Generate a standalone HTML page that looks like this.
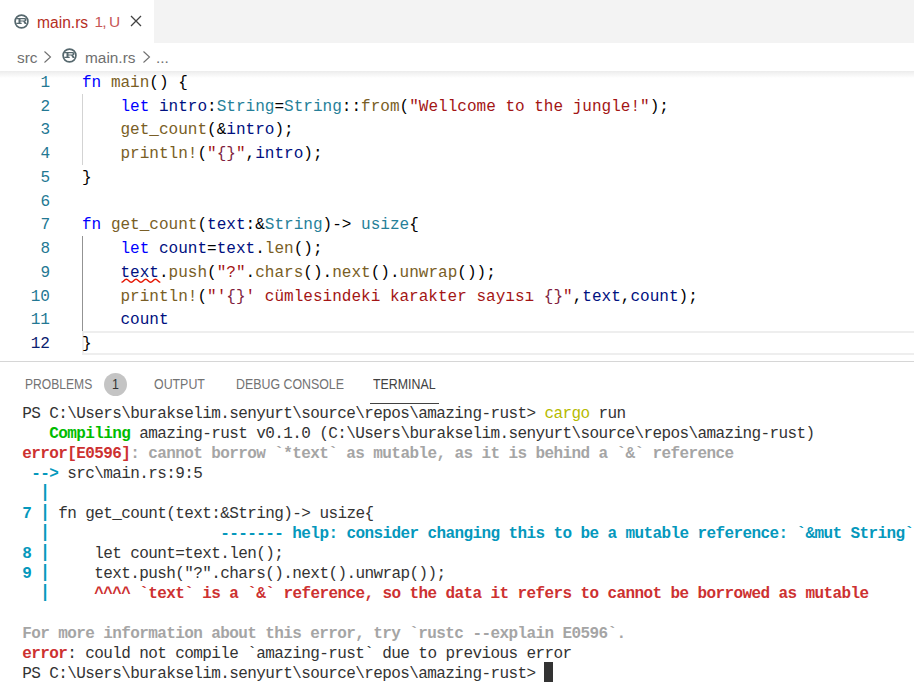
<!DOCTYPE html>
<html><head><meta charset="utf-8">
<style>
*{margin:0;padding:0;box-sizing:border-box}
html,body{width:914px;height:686px;overflow:hidden;background:#fff}
body{position:relative;font-family:"Liberation Sans",sans-serif}
.abs{position:absolute;white-space:pre}
#tabs{position:absolute;left:0;top:0;width:914px;height:43px;background:#f3f3f3}
#tab{position:absolute;left:0;top:0;width:154px;height:43px;background:#fff}
.ui{font-family:"Liberation Sans",sans-serif}
#editor{position:absolute;left:0;top:70.4px;width:914px;height:290px;overflow:hidden}
.shadow{position:absolute;left:0;top:71px;width:914px;height:7px;background:linear-gradient(#ececec,rgba(236,236,236,0))}
.ln{position:absolute;left:0;width:50px;text-align:right;font-family:"Liberation Mono",monospace;font-size:16.04px;line-height:23.75px;color:#237893;height:23.75px;padding-top:2px}
.code{position:absolute;left:82px;font-family:"Liberation Mono",monospace;font-size:16.04px;line-height:23.75px;color:#000;white-space:pre;height:23.75px;padding-top:2px}
.k{color:#0000ff}.f{color:#795e26}.v{color:#001080}.t{color:#267f99}.s{color:#a31515}.p{color:#811f3f}
.guide{position:absolute;width:1px;background:#d3d3d3}
#panel{position:absolute;left:0;top:361px;width:914px;height:325px;border-top:1px solid #d6d6d6}
.ph{position:absolute;top:375px;font-size:13.75px;color:#737373;white-space:pre;line-height:20px;transform:scaleX(.9);transform-origin:0 0}
.term{position:absolute;left:22.3px;font-family:"Liberation Mono",monospace;font-size:16px;letter-spacing:-0.6px;line-height:20px;color:#333;white-space:pre;height:20px;padding-top:2px}
.b{font-weight:bold}
.pp{display:inline-block;transform:translateY(-1.5px) scaleY(1.19)}
.red{color:#cd3131}.gr{color:#a5a5a5}.cy{color:#0598bc}.gn{color:#00bc00}.yl{color:#b5ba00}
</style></head><body>
<div id="tabs"><div id="tab"></div></div>
<!-- tab content -->
<svg class="abs" style="left:14px;top:13.5px" width="15" height="15" viewBox="0 0 15 15">
<circle cx="7.5" cy="7.5" r="6.4" fill="none" stroke="#56686e" stroke-width="1.7"/>
<path fill-rule="evenodd" d="M2.3 4.1H10.3C11.7 4.1 12.5 4.8 12.5 5.8C12.5 6.6 12 7.1 11.2 7.3L12.9 10H10.7L9.2 7.5H6.5V8.8H7.7V10H2.3V8.8H4.5V5.3H2.3Z M6.5 5.3V6.4H10.1C10.6 6.4 10.8 6.2 10.8 5.85C10.8 5.5 10.6 5.3 10.1 5.3Z" fill="#56686e"/>
</svg>
<div class="abs ui" style="left:37px;top:12.5px;font-size:15.6px;line-height:20px;color:#b52e1f">main.rs</div>
<div class="abs ui" style="left:94.5px;top:11.6px;font-size:15.5px;letter-spacing:-0.9px;line-height:20px;color:#c75656">1, U</div>
<svg class="abs" style="left:130px;top:15px" width="12" height="12" viewBox="0 0 12 12"><path d="M1 1L11 11M11 1L1 11" stroke="#424242" stroke-width="1.3"/></svg>
<!-- breadcrumbs -->
<div class="abs ui" style="left:17px;top:48px;font-size:15.4px;line-height:20px;color:#6f6f6f">src</div>
<svg class="abs" style="left:43px;top:50px" width="9" height="14" viewBox="0 0 9 14"><path d="M1.5 1.5L7.5 7L1.5 12.5" fill="none" stroke="#6f6f6f" stroke-width="1.1"/></svg>
<svg class="abs" style="left:61.6px;top:48.4px" width="15" height="15" viewBox="0 0 15 15">
<circle cx="7.5" cy="7.5" r="6.4" fill="none" stroke="#56686e" stroke-width="1.7"/>
<path fill-rule="evenodd" d="M2.3 4.1H10.3C11.7 4.1 12.5 4.8 12.5 5.8C12.5 6.6 12 7.1 11.2 7.3L12.9 10H10.7L9.2 7.5H6.5V8.8H7.7V10H2.3V8.8H4.5V5.3H2.3Z M6.5 5.3V6.4H10.1C10.6 6.4 10.8 6.2 10.8 5.85C10.8 5.5 10.6 5.3 10.1 5.3Z" fill="#56686e"/>
</svg>
<div class="abs ui" style="left:85px;top:48px;font-size:15.4px;line-height:20px;color:#6f6f6f">main.rs</div>
<svg class="abs" style="left:142px;top:50px" width="9" height="14" viewBox="0 0 9 14"><path d="M1.5 1.5L7.5 7L1.5 12.5" fill="none" stroke="#6f6f6f" stroke-width="1.1"/></svg>
<div class="abs ui" style="left:156px;top:48px;font-size:15.4px;line-height:20px;color:#6f6f6f">...</div>

<div id="editor"></div>
<div class="shadow"></div>

<!-- line numbers -->
<div class="ln" style="top:70px">1</div>
<div class="ln" style="top:94px">2</div>
<div class="ln" style="top:117px">3</div>
<div class="ln" style="top:141px">4</div>
<div class="ln" style="top:165px">5</div>
<div class="ln" style="top:189px">6</div>
<div class="ln" style="top:212px">7</div>
<div class="ln" style="top:236px">8</div>
<div class="ln" style="top:260px">9</div>
<div class="ln" style="top:284px">10</div>
<div class="ln" style="top:307px">11</div>
<div class="ln" style="top:331px;color:#0b216f">12</div>

<!-- current line highlight -->
<div class="abs" style="left:82px;top:331px;width:832px;height:24px;border:2px solid #eeeeee;border-right:none"></div>
<!-- indent guides -->
<div class="guide" style="left:82px;top:94px;height:71px"></div>
<div class="guide" style="left:82px;top:236px;height:95px;background:#939393"></div>

<div class="code" style="top:70px"><span class="k">fn</span> <span class="f">main</span>() {</div>
<div class="code" style="top:94px">    <span class="k">let</span> <span class="v">intro</span>:<span class="t">String</span>=<span class="t">String</span>::<span class="f">from</span>(<span class="s">"Wellcome to the jungle!"</span>);</div>
<div class="code" style="top:117px">    <span class="f">get_count</span>(&amp;<span class="v">intro</span>);</div>
<div class="code" style="top:141px">    <span class="f">println!</span>(<span class="s">"</span><span class="p">{}</span><span class="s">"</span>,<span class="v">intro</span>);</div>
<div class="code" style="top:165px">}</div>
<div class="code" style="top:212px"><span class="k">fn</span> <span class="f">get_count</span>(<span class="v">text</span>:&amp;<span class="t">String</span>)-&gt; <span class="t">usize</span>{</div>
<div class="code" style="top:236px">    <span class="k">let</span> <span class="v">count</span>=<span class="v">text</span>.<span class="f">len</span>();</div>
<div class="code" style="top:260px">    <span class="v">text</span>.<span class="f">push</span>(<span class="s">"?"</span>.<span class="f">chars</span>().<span class="f">next</span>().<span class="f">unwrap</span>());</div>
<div class="code" style="top:284px">    <span class="f">println!</span>(<span class="s">"'</span><span class="p">{}</span><span class="s">' cümlesindeki karakter sayısı </span><span class="p">{}</span><span class="s">"</span>,<span class="v">text</span>,<span class="v">count</span>);</div>
<div class="code" style="top:307px">    <span class="v">count</span></div>
<div class="code" style="top:331px">}</div>
<!-- squiggle -->
<svg class="abs" style="left:120.5px;top:277.5px" width="42" height="6" viewBox="0 0 42 6"><path d="M0.5 4.3 C2.70 4.30 3.15 1.30 5.35 1.30 C7.55 1.30 8.00 4.30 10.20 4.30 C12.40 4.30 12.85 1.30 15.05 1.30 C17.25 1.30 17.70 4.30 19.90 4.30 C22.10 4.30 22.55 1.30 24.75 1.30 C26.95 1.30 27.40 4.30 29.60 4.30 C31.80 4.30 32.25 1.30 34.45 1.30 C36.65 1.30 37.10 4.30 39.30 4.30" fill="none" stroke="#e51400" stroke-width="1.4"/></svg>

<div id="panel"></div>
<div class="ph" style="left:25px;transform:scaleX(.88)">PROBLEMS</div>
<div class="abs" style="left:104px;top:373px;width:23px;height:23px;border-radius:50%;background:#c4c4c4"></div>
<div class="ph" style="left:112px;color:#333">1</div>
<div class="ph" style="left:154px">OUTPUT</div>
<div class="ph" style="left:236px">DEBUG CONSOLE</div>
<div class="ph" style="left:373px;color:#424242">TERMINAL</div>
<div class="abs" style="left:370px;top:403px;width:69px;height:1px;background:#424242"></div>

<div class="term" style="top:402px">PS C:\Users\burakselim.senyurt\source\repos\amazing-rust&gt; <span class="yl">cargo</span> run</div>
<div class="term" style="top:422px">   <span class="b gn">Compiling</span> amazing-rust v0.1.0 (C:\Users\burakselim.senyurt\source\repos\amazing-rust)</div>
<div class="term b" style="top:442px"><span class="red">error[E0596]</span><span class="gr">: cannot borrow `*text` as mutable, as it is behind a `&amp;` reference</span></div>
<div class="term" style="top:462px"> <span class="b cy">--&gt;</span> src\main.rs:9:5</div>
<div class="term" style="top:482px">  <span class="b cy"><span class="pp">|</span></span></div>
<div class="term" style="top:502px"><span class="b cy">7 <span class="pp">|</span></span> fn get_count(text:&amp;String)-&gt; usize{</div>
<div class="term" style="top:522px">  <span class="b cy"><span class="pp">|</span>                   ------- help: consider changing this to be a mutable reference: `&amp;mut String`</span></div>
<div class="term" style="top:542px"><span class="b cy">8 <span class="pp">|</span></span>     let count=text.len();</div>
<div class="term" style="top:562px"><span class="b cy">9 <span class="pp">|</span></span>     text.push("?".chars().next().unwrap());</div>
<div class="term" style="top:582px">  <span class="b cy"><span class="pp">|</span></span>     <span class="b red">^^^^ `text` is a `&amp;` reference, so the data it refers to cannot be borrowed as mutable</span></div>
<div class="term b gr" style="top:622px">For more information about this error, try `rustc --explain E0596`.</div>
<div class="term" style="top:642px"><span class="b red">error</span>: could not compile `amazing-rust` due to previous error</div>
<div class="term" style="top:662px">PS C:\Users\burakselim.senyurt\source\repos\amazing-rust&gt; </div>
<div class="abs" style="left:544.3px;top:662px;width:9px;height:20px;background:#333"></div>
</body></html>
